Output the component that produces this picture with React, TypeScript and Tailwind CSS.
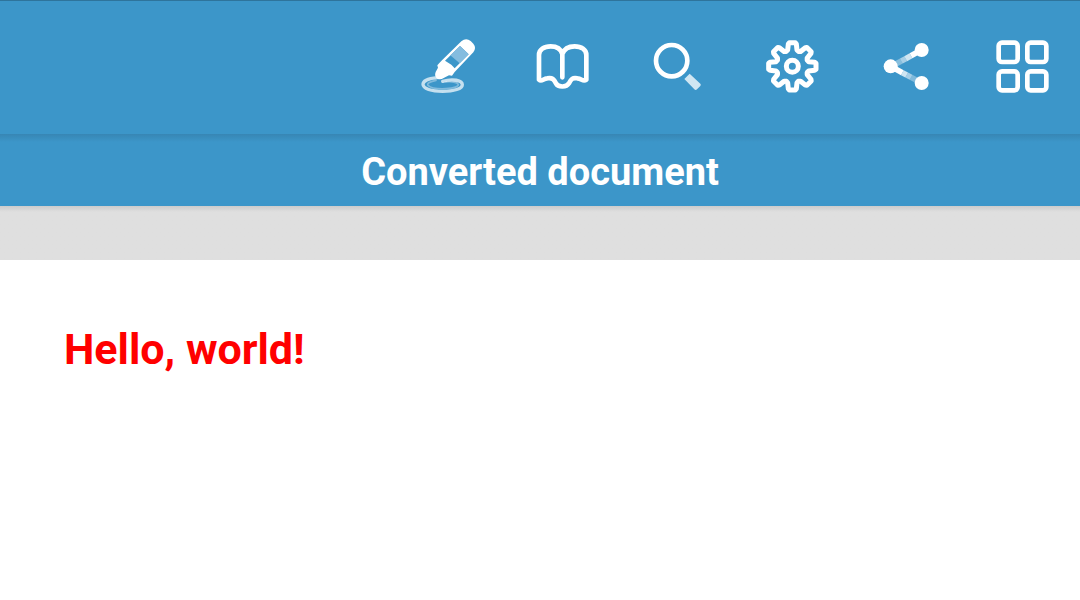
import type { ReactNode } from "react";

function ToolButton({ label, children }: { label: string; children: ReactNode }) {
  return (
    <button type="button" aria-label={label} className="h-[72px] w-20 cursor-pointer">
      <svg viewBox="0 0 240 216" className="h-full w-full" fill="none" stroke="white" strokeLinecap="round" strokeLinejoin="round" aria-hidden="true">
        {children}
      </svg>
    </button>
  );
}

function EditIcon() {
  return (
    <>
      <path d="M82 143 C55 145 39 153 39 163 C39 176 64 184 98 184 C132 184 157 176 157 164 C157 151 128 145 98 154" strokeWidth="10" opacity=".7" />
      <path d="M78 151 C61 154 50 160 54 166 C62 174 87 177 108 176 C132 175 147 169 145 163 C142 157 125 154 108 156" strokeWidth="5" opacity=".35" />
      <path d="M96 91 L154 34 Q168 22 182 33 L190 41 Q200 53 190 67 L134 126 L126 137 L117 136 L101 144 Q91 151 82 146 Q72 138 77 126 L84 113 L82 106 L88 99 Z" fill="white" stroke="none" />
      <path d="M150 48 L176 73 L134 115 L124 104 L105 92 Z" fill="#3c96c9" stroke="none" />
      <path d="M150 48 L176 73 L149 100 L121 76 Z" fill="#84bcdf" stroke="none" />
    </>
  );
}

function BookIcon() {
  return (
    <path d="M112 142 V72 C107 55 93 49 77 49 C57 49 42 59 42 75 V149 C50 157 54 146 67 145 C82 142 87 148 93 160 C99 172 124 173 132 160 C138 147 143 142 157 145 C171 146 174 157 184 149 V75 C184 59 169 49 149 49 C132 49 118 55 112 72" strokeWidth="14" />
  );
}

function SearchIcon() {
  return (
    <>
      <circle cx="95" cy="92" r="47" strokeWidth="14" />
      <path d="M149 131 L181 161 Q184 164 181 168 L171 178 Q167 182 163 178 L133 147 Z" fill="white" stroke="none" opacity=".76" />
    </>
  );
}

const toothAngles = [0, 45, 90, 135, 180, 225, 270, 315];

function gearOutline() {
  const points = toothAngles.flatMap((angle) => {
    const a = (angle * Math.PI) / 180;
    return [[-18, -45], [-14, -49], [-12, -67], [-9, -71], [9, -71], [12, -67], [14, -49], [18, -45]].map(
      ([x, y]) => `${112 + x * Math.cos(a) - y * Math.sin(a)},${109 + x * Math.sin(a) + y * Math.cos(a)}`,
    );
  });
  return points.join(" ");
}

function SettingsIcon() {
  return (
    <>
      <polygon points={gearOutline()} strokeWidth="15" />
      <circle cx="112" cy="109" r="18" strokeWidth="15" />
    </>
  );
}

function ShareIcon() {
  return (
    <>
      <g strokeLinecap="butt" strokeWidth="17">
        <path d="M154 60 L123 77" />
        <path d="M123 77 L107 86" opacity=".76" />
        <path d="M107 86 L94 93" opacity=".55" />
        <path d="M94 93 L76 103" opacity=".38" />
        <path d="M62 109 L97 128" />
        <path d="M97 128 L110 135" opacity=".76" />
        <path d="M110 135 L123 142" opacity=".55" />
        <path d="M123 142 L140 151" opacity=".35" />
      </g>
      <g fill="white" stroke="none">
        <circle cx="155" cy="60" r="21" />
        <circle cx="62" cy="109" r="21" />
        <circle cx="155" cy="159" r="21" />
      </g>
    </>
  );
}

function GridIcon() {
  return (
    <g strokeWidth="14">
      <rect x="41" y="38" width="57" height="58" rx="10" />
      <rect x="127" y="38" width="57" height="58" rx="10" />
      <rect x="41" y="124" width="57" height="57" rx="10" />
      <rect x="127" y="124" width="57" height="57" rx="10" />
    </g>
  );
}

export default function App() {
  return (
    <div className="min-h-screen bg-white font-['Roboto',sans-serif]">
      <header className="bg-[#3c96c9] text-white">
        <div className="flex h-[134px] items-start justify-end gap-[35px] border-t border-[#2e749c] pt-[29px] pr-[15px]">
          <ToolButton label="Edit"><EditIcon /></ToolButton>
          <ToolButton label="Reading mode"><BookIcon /></ToolButton>
          <ToolButton label="Search"><SearchIcon /></ToolButton>
          <ToolButton label="Settings"><SettingsIcon /></ToolButton>
          <ToolButton label="Share"><ShareIcon /></ToolButton>
          <ToolButton label="More"><GridIcon /></ToolButton>
        </div>
        <div className="flex h-[72px] items-center justify-center bg-linear-to-b from-[#3786b4] to-[#3c96c9] to-[8px] pt-1">
          <h1 className="text-[38px] leading-[44px] font-bold">Converted document</h1>
        </div>
      </header>
      <div className="h-[54px] bg-linear-to-b from-[#cccccc] to-[#dfdfdf] to-[6px]" />
      <main className="px-16 pt-16">
        <h2 className="text-[43px] leading-[50px] font-bold text-[#ff0000]">Hello, world!</h2>
      </main>
    </div>
  );
}
